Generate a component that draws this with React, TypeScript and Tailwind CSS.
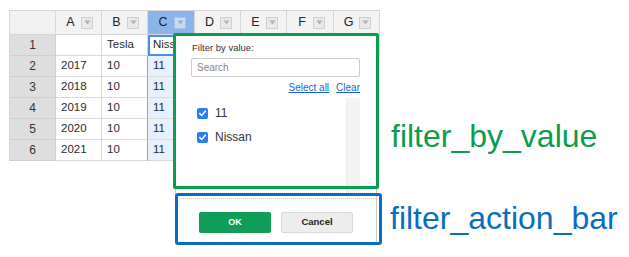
import React from "react";

const cols = ["A", "B", "C", "D", "E", "F", "G"];
const widths = ["w-[46px]", "w-[46px]", "w-[47px]", "w-[46px]", "w-[46px]", "w-[47px]", "w-[46px]"];

const rows: string[][] = [
  ["", "Tesla", "Nissan"],
  ["2017", "10", "11"],
  ["2018", "10", "11"],
  ["2019", "10", "11"],
  ["2020", "10", "11"],
  ["2021", "10", "11"],
];

function DropBtn({ active }: { active?: boolean }) {
  return (
    <div
      className={`w-[12px] h-[12px] border flex items-center justify-center ${
        active ? "border-[#a9c3e6] bg-[#c9dbf3]" : "border-[#cfcfcf] bg-[#e9e9e9]"
      }`}
    >
      <svg width="7" height="5" viewBox="0 0 7 5">
        <path d="M0.5 0.5 L6.5 0.5 L3.5 4.5 Z" fill={active ? "#9bb0cc" : "#b3b3b3"} />
      </svg>
    </div>
  );
}

function Check() {
  return (
    <div className="w-[11px] h-[11px] rounded-[2px] bg-[#2c7cf4] flex items-center justify-center">
      <svg width="9" height="9" viewBox="0 0 9 9">
        <path d="M1.8 4.6 L3.7 6.5 L7.3 2.2" stroke="#fff" strokeWidth="1.6" fill="none" strokeLinecap="round" strokeLinejoin="round" />
      </svg>
    </div>
  );
}

export default function App() {
  return (
    <div className="relative w-[629px] h-[257px] bg-white overflow-hidden font-['Liberation_Sans',Arial,sans-serif]">
      {/* spreadsheet */}
      <div className="ml-[9px] mt-[10px] inline-flex flex-col border-l border-t border-[#d6d6d6]">
        <div className="flex h-[24px]">
          <div className="w-[46px] h-full bg-[#f1f1f1] border-r border-b border-[#d6d6d6]" />
          {cols.map((c, i) => (
            <div
              key={c}
              className={`${widths[i]} h-full flex items-center border-r border-b border-[#d6d6d6] pr-[8px] ${
                c === "C" ? "bg-[#8db4ea]" : "bg-[#f3f3f3]"
              }`}
            >
              <div className="flex-1 text-center text-[12.5px] text-[#222] pl-[4px]">{c}</div>
              <DropBtn active={c === "C"} />
            </div>
          ))}
        </div>
        {rows.map((r, ri) => (
          <div key={ri} className="flex h-[21px]">
            <div className="w-[46px] h-full bg-[#dedede] border-r border-b border-[#cfcfcf] flex items-center justify-center text-[12px] text-[#333]">
              {ri + 1}
            </div>
            {cols.map((c, i) => {
              const v = r[i] ?? "";
              const isC = c === "C";
              const sel = isC && ri === 0;
              return (
                <div
                  key={c}
                  className={`${widths[i]} h-full border-r border-b border-[#d9d9d9] flex items-center pl-[5px] text-[11.5px] text-[#2a2a2a] whitespace-nowrap overflow-hidden ${
                    sel
                      ? "bg-white outline outline-2 -outline-offset-2 outline-[#4a90e8]"
                      : isC
                      ? "bg-[#e7f0fc] border-l border-l-[#79a8e6] -ml-px"
                      : "bg-white"
                  }`}
                >
                  {v}
                </div>
              );
            })}
          </div>
        ))}
      </div>

      {/* filter popup */}
      <div className="absolute left-[175px] top-[35px] w-[202px] h-[208px] bg-white border border-[#cacaca] flex flex-col">
        <div className="pl-[16px] pt-[6px] h-[18px] text-[9.5px] leading-[12px] text-[#333]">Filter by value:</div>
        <div className="ml-[15px] mt-[4px] w-[169px] h-[19px] border border-[#cdcdcd] rounded-[2px] flex items-center pl-[5px] text-[10px] text-[#8a8a8a]">
          Search
        </div>
        <div className="mt-[5px] h-[12px] flex justify-end gap-[7px] pr-[16px] text-[10px] leading-[12px] text-[#1b5fd1] underline">
          <span>Select all</span>
          <span>Clear</span>
        </div>
        <div className="mt-[4px] h-[100px] flex">
          <div className="flex-1 pl-[21px] pt-[3px] flex flex-col">
            <div className="h-[24px] flex items-center gap-[7px] text-[12px] text-[#333]">
              <Check />
              <span>11</span>
            </div>
            <div className="h-[24px] flex items-center gap-[7px] text-[12px] text-[#333]">
              <Check />
              <span>Nissan</span>
            </div>
          </div>
          <div className="w-[14px] h-full bg-[#f4f4f4] border-l border-[#ececec] mr-[16px]" />
        </div>
        <div className="flex-1 border-t border-dotted border-[#c8c8c8] flex items-start pt-[13px] pl-[23px] gap-[10px]">
          <div className="w-[72px] h-[21px] rounded-[2px] bg-[#0f9d58] flex items-center justify-center text-[9px] font-bold text-white">
            OK
          </div>
          <div className="w-[72px] h-[21px] rounded-[2px] bg-[#ededed] border border-[#d8d8d8] flex items-center justify-center text-[9.5px] font-bold text-[#222]">
            Cancel
          </div>
        </div>
      </div>

      {/* annotation outlines */}
      <div className="absolute left-[173px] top-[33px] w-[206px] h-[156px] border-[3px] border-[#0b9c4f] rounded-[2px] pointer-events-none" />
      <div className="absolute left-[175px] top-[193px] w-[207px] h-[52px] border-[3px] border-[#0a6dc2] rounded-[3px] pointer-events-none" />

      {/* labels */}
      <div className="absolute left-[391px] top-[120px] text-[32px] leading-[32px] text-[#0b9c4f]">filter_by_value</div>
      <div className="absolute left-[390px] top-[202px] text-[32px] leading-[32px] text-[#0a6dc2]">filter_action_bar</div>
    </div>
  );
}
